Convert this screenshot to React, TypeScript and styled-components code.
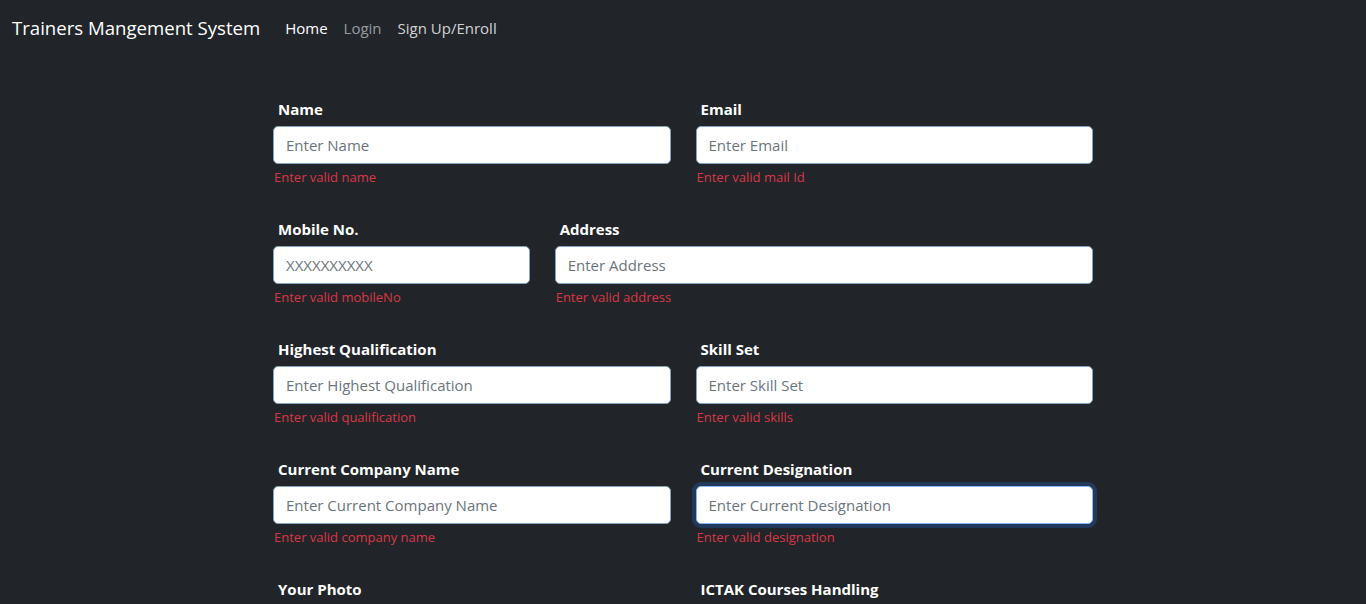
import React from "react";
import styled, { createGlobalStyle } from "styled-components";

const Global = createGlobalStyle`
  html, body { margin: 0; padding: 0; background: #212529; }
  body { font-family: "Open Sans", "Noto Sans", sans-serif; color: #fff; }
  * { box-sizing: border-box; }
`;

const Nav = styled.nav`
  display: flex;
  align-items: center;
  height: 56px;
  padding: 8px 12px;
`;

const Brand = styled.a`
  font-size: 18.6px;
  line-height: 30px;
  color: #fff;
  margin-right: 25px;
  text-decoration: none;
`;

const NavList = styled.div`
  display: flex;
  gap: 16px;
`;

const NavLink = styled.a<{ $tone: "active" | "muted" | "light" }>`
  font-size: 15px;
  line-height: 24px;
  text-decoration: none;
  color: ${(p) =>
    p.$tone === "active" ? "#fff" : p.$tone === "muted" ? "rgba(255,255,255,0.55)" : "rgba(255,255,255,0.8)"};
`;

const Form = styled.form`
  width: 820px;
  margin: 0 auto;
  padding-top: 41px;
  display: flex;
  flex-direction: column;
  gap: 29px;
`;

const Row = styled.div<{ $cols: string }>`
  display: grid;
  grid-template-columns: ${(p) => p.$cols};
  margin: 0 -12.5px;
`;

const Field = styled.div`
  padding: 0 12.5px;
  display: flex;
  flex-direction: column;
`;

const Label = styled.label`
  font-weight: 700;
  font-size: 15px;
  line-height: 24px;
  padding-left: 5px;
  margin-bottom: 5px;
`;

const Input = styled.input`
  height: 38px;
  width: 100%;
  padding: 6px 12px;
  font-family: inherit;
  font-size: 15px;
  color: #212529;
  background: #fff;
  border: 1px solid #86a5c0;
  border-radius: 5px;
  outline: none;
  &::placeholder { color: #6c757d; }
  &:focus {
    border-color: #86b7fe;
    box-shadow: 0 0 0 4px #23395a;
  }
`;

const Error = styled.div`
  margin-top: 3px;
  padding-left: 1px;
  font-size: 13px;
  line-height: 21px;
  color: #dc3545;
`;

type F = { label: string; placeholder: string; error?: string; focus?: boolean };

const rows: { cols: string; fields: F[] }[] = [
  {
    cols: "1fr 1fr",
    fields: [
      { label: "Name", placeholder: "Enter Name", error: "Enter valid name" },
      { label: "Email", placeholder: "Enter Email", error: "Enter valid mail Id" },
    ],
  },
  {
    cols: "1fr 2fr",
    fields: [
      { label: "Mobile No.", placeholder: "XXXXXXXXXX", error: "Enter valid mobileNo" },
      { label: "Address", placeholder: "Enter Address", error: "Enter valid address" },
    ],
  },
  {
    cols: "1fr 1fr",
    fields: [
      { label: "Highest Qualification", placeholder: "Enter Highest Qualification", error: "Enter valid qualification" },
      { label: "Skill Set", placeholder: "Enter Skill Set", error: "Enter valid skills" },
    ],
  },
  {
    cols: "1fr 1fr",
    fields: [
      { label: "Current Company Name", placeholder: "Enter Current Company Name", error: "Enter valid company name" },
      { label: "Current Designation", placeholder: "Enter Current Designation", error: "Enter valid designation", focus: true },
    ],
  },
  {
    cols: "1fr 1fr",
    fields: [
      { label: "Your Photo", placeholder: "" },
      { label: "ICTAK Courses Handling", placeholder: "" },
    ],
  },
];

export default function App() {
  return (
    <>
      <Global />
      <Nav>
        <Brand href="#">Trainers Mangement System</Brand>
        <NavList>
          <NavLink href="#" $tone="active">Home</NavLink>
          <NavLink href="#" $tone="muted">Login</NavLink>
          <NavLink href="#" $tone="light">Sign Up/Enroll</NavLink>
        </NavList>
      </Nav>
      <Form onSubmit={(e) => e.preventDefault()}>
        {rows.map((r, i) => (
          <Row key={i} $cols={r.cols}>
            {r.fields.map((f) => (
              <Field key={f.label}>
                <Label>{f.label}</Label>
                <Input placeholder={f.placeholder} autoFocus={f.focus} />
                {f.error && <Error>{f.error}</Error>}
              </Field>
            ))}
          </Row>
        ))}
      </Form>
    </>
  );
}
